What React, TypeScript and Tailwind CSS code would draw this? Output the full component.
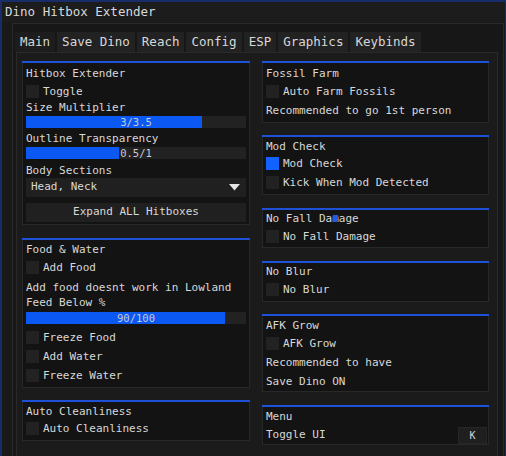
import type { ReactNode } from "react";

const mono = "font-['DejaVu_Sans_Mono','Liberation_Mono',monospace]";

function Panel({ className, body, children }: { className: string; body: string; children: ReactNode }) {
  return (
    <div className={"flex flex-col " + className}>
      <div className="h-[2px] bg-[#1f50d8]" />
      <div className={"flex flex-col border-x border-b border-[#282828] bg-[#131313] px-[3px] " + body}>{children}</div>
    </div>
  );
}

function Txt({ className, children }: { className: string; children: ReactNode }) {
  return <div className={"h-[13px] leading-[13px] whitespace-nowrap " + className}>{children}</div>;
}

function Check({ className, label, on }: { className: string; label: string; on?: boolean }) {
  return (
    <div className={"flex h-[15px] items-center gap-[4px] " + className}>
      <div className={"h-[13px] w-[13px] " + (on ? "bg-[#1162ff]" : "bg-[#222222]")} />
      <span className="leading-[13px] whitespace-nowrap">{label}</span>
    </div>
  );
}

function Slider({ className, fill, label }: { className: string; fill: number; label: string }) {
  return (
    <div className={"relative h-[12px] bg-[#222222] " + className}>
      <div className="h-full bg-[#0b58f2]" style={{ width: fill }} />
      <div className="absolute inset-0 flex items-center justify-center text-[10.5px] leading-[12px] text-[#c9cbd6]">{label}</div>
    </div>
  );
}

const tabs = ["Main", "Save Dino", "Reach", "Config", "ESP", "Graphics", "Keybinds"];

export default function App() {
  return (
    <div className={"flex h-[456px] w-[506px] flex-col overflow-hidden border-l-2 border-t-2 border-r border-[#182c6a] bg-[#191919] text-[11px] text-[#d8d8d8] " + mono}>
      <div className="flex h-[20px] items-center bg-[#1c1c1c] pl-[3px] text-[12.5px] text-[#d8d8d8]">Dino Hitbox Extender</div>

      <div className="ml-[10px] mt-[1px] flex w-[492px] flex-1 flex-col border-x border-t border-[#2a2a2a] bg-[#171717] pl-[2px] pt-[8px]">
        <div className="flex h-[20px] gap-[2px]">
          {tabs.map((t) => (
            <div key={t} className={"flex h-full items-center px-[5px] text-[12.5px] " + (t === "Main" ? "bg-[#1d1d1d]" : "bg-[#222222]")}>
              {t}
            </div>
          ))}
        </div>

        <div className="ml-[1px] flex w-[482px] flex-1 gap-[12px] border-x border-t border-[#2a2a2a] bg-[#1b1b1b] pl-[5px] pt-[8px]">
          {/* left column */}
          <div className="flex w-[228px] flex-col">
            <Panel className="" body="pb-[2px]">
              <Txt className="mt-[4px]">Hitbox Extender</Txt>
              <Check className="mt-[4px]" label="Toggle" />
              <Txt className="mt-[2px]">Size Multiplier</Txt>
              <Slider className="mt-[2px]" fill={176} label="3/3.5" />
              <Txt className="mt-[4px]">Outline Transparency</Txt>
              <Slider className="mt-[2px]" fill={93} label="0.5/1" />
              <Txt className="mt-[5px]">Body Sections</Txt>
              <div className="mt-[1px] flex h-[19px] items-center justify-between bg-[#202020] pl-[5px] pr-[6px]">
                <span>Head, Neck</span>
                <svg width="11" height="7" viewBox="0 0 11 7"><path d="M0 0H11L5.5 6.5Z" fill="#e4e4e4" /></svg>
              </div>
              <div className="mt-[6px] flex h-[19px] items-center justify-center bg-[#202020]">Expand ALL Hitboxes</div>
            </Panel>

            <Panel className="mt-[13px]" body="pb-[4px]">
              <Txt className="mt-[3px]">Food &amp; Water</Txt>
              <Check className="mt-[4px]" label="Add Food" />
              <Txt className="mt-[6px]">Add food doesnt work in Lowland</Txt>
              <Txt className="mt-[2px]">Feed Below %</Txt>
              <Slider className="mt-[3px]" fill={199} label="90/100" />
              <Check className="mt-[6px]" label="Freeze Food" />
              <Check className="mt-[4px]" label="Add Water" />
              <Check className="mt-[4px]" label="Freeze Water" />
            </Panel>

            <Panel className="mt-[12px]" body="pb-[4px]">
              <Txt className="mt-[3px]">Auto Cleanliness</Txt>
              <Check className="mt-[3px]" label="Auto Cleanliness" />
            </Panel>
          </div>

          {/* right column */}
          <div className="flex w-[227px] flex-col">
            <Panel className="" body="pb-[5px]">
              <Txt className="mt-[4px]">Fossil Farm</Txt>
              <Check className="mt-[4px]" label="Auto Farm Fossils" />
              <Txt className="mt-[5px]">Recommended to go 1st person</Txt>
            </Panel>

            <Panel className="mt-[12px]" body="pb-[4px]">
              <Txt className="mt-[3px]">Mod Check</Txt>
              <Check className="mt-[3px]" label="Mod Check" on />
              <Check className="mt-[4px]" label="Kick When Mod Detected" />
            </Panel>

            <Panel className="mt-[13px]" body="pb-[3px]">
              <Txt className="mt-[2px]">
                No Fall Da
                <span className="relative">
                  m
                  <span className="absolute left-[1px] top-[3px] h-[7px] w-[5px] bg-[#1f5ae8]" />
                </span>
                age
              </Txt>
              <Check className="mt-[4px]" label="No Fall Damage" />
            </Panel>

            <Panel className="mt-[13px]" body="pb-[4px]">
              <Txt className="mt-[2px]">No Blur</Txt>
              <Check className="mt-[4px]" label="No Blur" />
            </Panel>

            <Panel className="mt-[12px]" body="pb-[3px]">
              <Txt className="mt-[3px]">AFK Grow</Txt>
              <Check className="mt-[4px]" label="AFK Grow" />
              <Txt className="mt-[5px]">Recommended to have</Txt>
              <Txt className="mt-[6px]">Save Dino ON</Txt>
            </Panel>

            <Panel className="mt-[13px]" body="pb-[0px]">
              <Txt className="mt-[3px]">Menu</Txt>
              <div className="mt-[4px] flex h-[17px] items-center justify-between">
                <span>Toggle UI</span>
                <div className="-mr-[2px] flex h-[17px] w-[29px] items-center justify-center border border-[#262626] bg-[#1f1f1f] text-[10px]">K</div>
              </div>
            </Panel>
          </div>
        </div>
      </div>
    </div>
  );
}
